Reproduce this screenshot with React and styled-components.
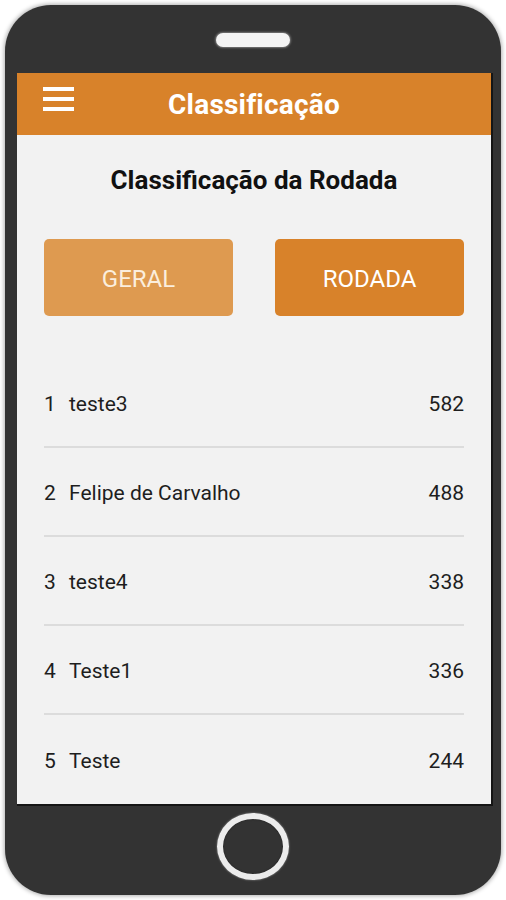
import React from 'react';
import styled, { createGlobalStyle } from 'styled-components';

const GlobalStyle = createGlobalStyle`
    html, body {
        margin: 0;
        padding: 0;
        background: #ffffff;
    }
    body {
        font-family: Roboto, "Liberation Sans", Arial, sans-serif;
    }
`;

const ranking = [
    { pos: 1, name: 'teste3', points: 582 },
    { pos: 2, name: 'Felipe de Carvalho', points: 488 },
    { pos: 3, name: 'teste4', points: 338 },
    { pos: 4, name: 'Teste1', points: 336 },
    { pos: 5, name: 'Teste', points: 244 },
];

export default function App() {
    return (
        <>
            <GlobalStyle />
            <Page>
                <Phone>
                    <TopBezel>
                        <Speaker />
                    </TopBezel>
                    <Screen>
                        <AppBar>
                            <MenuButton aria-label="menu">
                                <span />
                                <span />
                                <span />
                            </MenuButton>
                            <AppTitle>Classificação</AppTitle>
                        </AppBar>
                        <Content>
                            <Heading>Classificação da Rodada</Heading>
                            <Tabs>
                                <TabButton>GERAL</TabButton>
                                <TabButton $active>RODADA</TabButton>
                            </Tabs>
                            <List>
                                {ranking.map((item) => (
                                    <Row key={item.pos}>
                                        <Pos>{item.pos}</Pos>
                                        <Name>{item.name}</Name>
                                        <Points>{item.points}</Points>
                                    </Row>
                                ))}
                            </List>
                        </Content>
                    </Screen>
                    <BottomBezel>
                        <HomeButton />
                    </BottomBezel>
                </Phone>
            </Page>
        </>
    );
}

const Page = styled.div`
    width: 506px;
    height: 900px;
    padding: 5px;
    box-sizing: border-box;
`;

const Phone = styled.div`
    width: 496px;
    height: 890px;
    background: #333333;
    border-radius: 46px;
    box-shadow: 0 0 4px 1px #b0b0b0;
    display: flex;
    flex-direction: column;
    overflow: hidden;
`;

const TopBezel = styled.div`
    height: 68px;
    display: flex;
    justify-content: center;
    padding-top: 28px;
    box-sizing: border-box;
`;

const Speaker = styled.div`
    width: 74px;
    height: 14px;
    border-radius: 7px;
    background: #f4f4f4;
    box-shadow: 0 0 2px 1px rgba(255, 255, 255, 0.35);
`;

const Screen = styled.div`
    margin: 0 8px 0 12px;
    width: 474px;
    height: 731px;
    background: #f2f2f2;
    border-right: 2px solid #151515;
    border-bottom: 2px solid #151515;
    display: flex;
    flex-direction: column;
    overflow: hidden;
`;

const AppBar = styled.div`
    height: 62px;
    flex-shrink: 0;
    background: #d8822a;
    display: flex;
    align-items: center;
    justify-content: center;
    position: relative;
`;

const MenuButton = styled.div`
    position: absolute;
    left: 26px;
    top: 14px;
    width: 31px;
    display: flex;
    flex-direction: column;
    gap: 6px;

    span {
        display: block;
        height: 4px;
        background: #ffffff;
    }
`;

const AppTitle = styled.h1`
    margin: 0;
    color: #ffffff;
    font-size: 28px;
    font-weight: 700;
    letter-spacing: 0.2px;
`;

const Content = styled.div`
    padding: 0 27px;
    display: flex;
    flex-direction: column;
`;

const Heading = styled.h2`
    margin: 28px 0 0;
    height: 34px;
    line-height: 34px;
    text-align: center;
    color: #111111;
    font-size: 26px;
    font-weight: 700;
`;

const Tabs = styled.div`
    margin-top: 42px;
    display: flex;
    justify-content: space-between;
`;

const TabButton = styled.button`
    width: 189px;
    height: 77px;
    border: none;
    border-radius: 5px;
    background: ${(p) => (p.$active ? '#d8822a' : '#de9a50')};
    color: ${(p) => (p.$active ? '#ffffff' : '#fbeedd')};
    font-family: Roboto, "Liberation Sans", Arial, sans-serif;
    font-size: 24px;
    font-weight: 400;
    padding: 3px 0 0;
`;

const List = styled.div`
    margin-top: 43px;
    display: flex;
    flex-direction: column;
`;

const Row = styled.div`
    height: 89px;
    box-sizing: border-box;
    display: flex;
    align-items: center;
    border-bottom: 2px solid #dcdcdc;
    color: #1e1e1e;
    font-size: 21px;
    padding-top: 3px;

    &:last-child {
        border-bottom: none;
    }
`;

const Pos = styled.span`
    width: 25px;
`;

const Name = styled.span`
    flex: 1;
`;

const Points = styled.span`
    text-align: right;
`;

const BottomBezel = styled.div`
    flex: 1;
    display: flex;
    justify-content: center;
    padding-top: 7px;
`;

const HomeButton = styled.div`
    width: 60px;
    height: 55px;
    border-radius: 50%;
    border: 6px solid #ececec;
    box-shadow: 0 0 2px rgba(255, 255, 255, 0.5), inset 0 0 2px rgba(0, 0, 0, 0.4);
`;
